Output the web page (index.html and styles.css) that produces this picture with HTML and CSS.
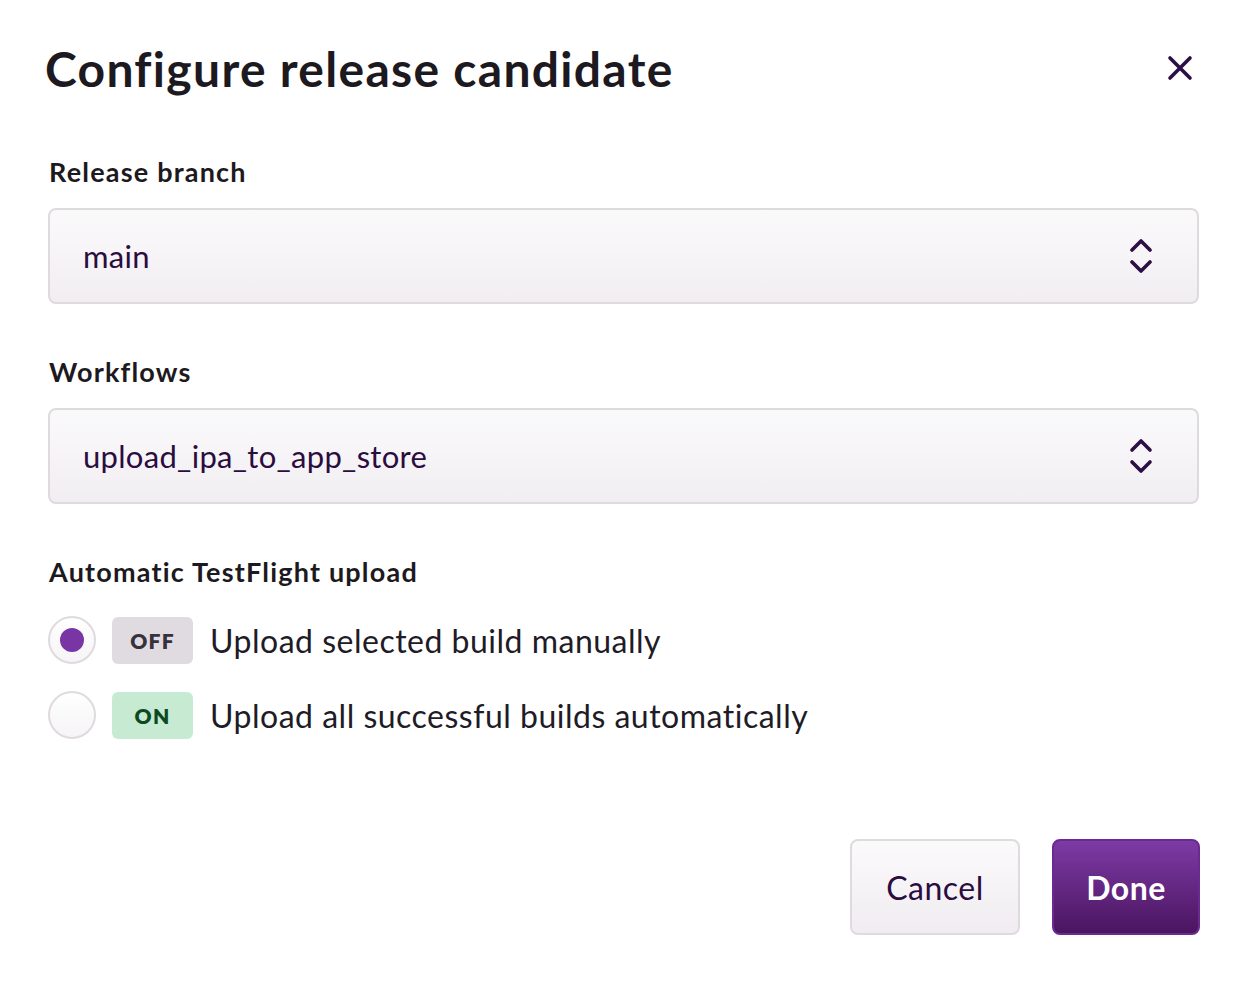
FILE: index.html
```html
<!DOCTYPE html>
<html lang="en">
<head>
<meta charset="utf-8">
<title>Configure release candidate</title>
<link rel="stylesheet" href="styles.css">
</head>
<body>
<div class="dialog">
  <div class="header">
    <h1 class="title">Configure release candidate</h1>
    <button class="close" aria-label="Close">
      <svg width="26" height="26" viewBox="0 0 26 26"><path d="M3 3L23 23M23 3L3 23" stroke="#2e0f44" stroke-width="3.6" stroke-linecap="round"/></svg>
    </button>
  </div>

  <div class="field">
    <div class="label">Release branch</div>
    <div class="select">
      <span class="value">main</span>
      <svg class="chev" width="24" height="36" viewBox="0 0 24 36"><path d="M3 12L12 3L21 12M3 24L12 33L21 24" fill="none" stroke="#2e0f44" stroke-width="3.6" stroke-linecap="round" stroke-linejoin="round"/></svg>
    </div>
  </div>

  <div class="field">
    <div class="label">Workflows</div>
    <div class="select">
      <span class="value">upload_ipa_to_app_store</span>
      <svg class="chev" width="24" height="36" viewBox="0 0 24 36"><path d="M3 12L12 3L21 12M3 24L12 33L21 24" fill="none" stroke="#2e0f44" stroke-width="3.6" stroke-linecap="round" stroke-linejoin="round"/></svg>
    </div>
  </div>

  <div class="field">
    <div class="label">Automatic TestFlight upload</div>
    <div class="options">
      <div class="option">
        <span class="radio checked"><span class="dot"></span></span>
        <span class="badge off">OFF</span>
        <span class="opt-text">Upload selected build manually</span>
      </div>
      <div class="option">
        <span class="radio"></span>
        <span class="badge on">ON</span>
        <span class="opt-text">Upload all successful builds automatically</span>
      </div>
    </div>
  </div>

  <div class="footer">
    <button class="btn cancel">Cancel</button>
    <button class="btn done">Done</button>
  </div>
</div>
</body>
</html>
```

FILE: styles.css
```css
* { box-sizing: border-box; }
html, body { margin: 0; padding: 0; background: #fff; }
body { font-family: "Lato", "Open Sans", sans-serif; color: #1f1a24; }

.dialog {
  width: 1256px;
  height: 986px;
  padding: 28px 57px 0 48px;
  display: flex;
  flex-direction: column;
}

.header {
  height: 80px;
  display: flex;
  align-items: center;
  justify-content: space-between;
  margin-left: -3px;
}
.title {
  margin: 0;
  font-size: 48px;
  font-weight: 700;
  color: #1d1920;
  letter-spacing: 1.3px;
}
.close {
  border: none;
  background: none;
  padding: 0;
  width: 40px;
  height: 40px;
  display: flex;
  align-items: center;
  justify-content: center;
  margin-right: -1px;
}

.field { display: flex; flex-direction: column; }
.label {
  font-size: 27px;
  font-weight: 700;
  color: #1d1920;
  line-height: 36px;
  margin-left: 1px;
  letter-spacing: 1.2px;
}
.header + .field { margin-top: 46px; }
.field + .field { margin-top: 50px; }

.select {
  margin-top: 18px;
  height: 96px;
  border: 2px solid #dedade;
  border-radius: 8px;
  background: linear-gradient(#fbfafb, #f1eef2);
  display: flex;
  align-items: center;
  justify-content: space-between;
  padding: 0 44px 0 33px;
}
.value {
  font-size: 31px;
  color: #2a0d3e;
  letter-spacing: 0.3px;
}
.chev { display: block; }

.options {
  margin-top: 26px;
  display: flex;
  flex-direction: column;
  gap: 27px;
}
.option {
  display: flex;
  align-items: center;
  height: 48px;
}
.radio {
  width: 48px;
  height: 48px;
  border-radius: 50%;
  border: 2px solid #dfdadf;
  background: linear-gradient(#fff, #f6f4f6);
  display: flex;
  align-items: center;
  justify-content: center;
  flex: none;
}
.dot {
  width: 24px;
  height: 24px;
  border-radius: 50%;
  background: #7a35a5;
}
.badge {
  margin-left: 16px;
  width: 81px;
  height: 47px;
  border-radius: 6px;
  display: flex;
  align-items: center;
  justify-content: center;
  font-size: 21px;
  font-weight: 800;
  letter-spacing: 1.2px;
  flex: none;
}
.badge.off { background: #e0dbe1; color: #37313c; }
.badge.on { background: #c6ebd2; color: #0d4a22; }
.opt-text {
  margin-left: 17px;
  font-size: 32px;
  color: #201b26;
  letter-spacing: 0.5px;
}

.footer {
  margin-top: auto;
  margin-bottom: 51px;
  display: flex;
  justify-content: flex-end;
  gap: 32px;
  margin-right: -1px;
}
.btn {
  height: 96px;
  border-radius: 8px;
  font-family: inherit;
  font-size: 32px;
  cursor: pointer;
  letter-spacing: 0.5px;
}
.cancel {
  width: 170px;
  border: 2px solid #dedade;
  background: linear-gradient(#fbfafb, #f0ecf1);
  color: #2a0d3e;
}
.done {
  width: 148px;
  border: 2px solid #6a2a90;
  background: linear-gradient(#7d3aa5, #4b1560);
  color: #fff;
  font-weight: 700;
}
```
